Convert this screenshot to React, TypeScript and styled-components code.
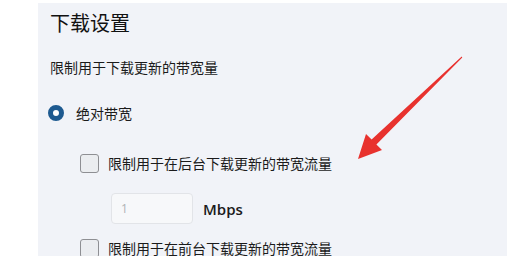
import React from "react";
import styled, { createGlobalStyle } from "styled-components";

const GlobalStyle = createGlobalStyle`
  html, body {
    margin: 0;
    padding: 0;
    background: #ffffff;
  }
  body {
    font-family: "Noto Sans CJK SC", "Noto Sans", sans-serif;
    color: #1b1b1b;
  }
`;

const Page = styled.div`
  width: 512px;
  height: 263px;
  overflow: hidden;
  padding: 3px 0 0 38px;
  box-sizing: border-box;
`;

const Panel = styled.section`
  position: relative;
  width: 469px;
  height: 253px;
  overflow: hidden;
  background: #f1f3f8;
  padding: 6px 0 0 12px;
  box-sizing: border-box;
  display: flex;
  flex-direction: column;
`;

const Title = styled.h2`
  margin: 0;
  font-size: 20px;
  line-height: 28px;
  font-weight: 400;
  color: #111;
`;

const Subtitle = styled.p`
  margin: 20px 0 0;
  font-size: 14px;
  line-height: 20px;
  color: #1b1b1b;
`;

const Row = styled.label<{ $top: number; $indent?: number }>`
  display: flex;
  align-items: center;
  gap: 9px;
  margin-top: ${(p) => p.$top}px;
  margin-left: ${(p) => p.$indent ?? 0}px;
  height: 20px;
  font-size: 14px;
  line-height: 20px;
  color: #1b1b1b;
`;

const Radio = styled.span`
  width: 16px;
  height: 16px;
  border-radius: 50%;
  box-sizing: border-box;
  border: 5px solid #1e5a90;
  background: #fff;
  margin-left: -2px;
  margin-right: 3px;
`;

const Checkbox = styled.span`
  width: 19px;
  height: 19px;
  box-sizing: border-box;
  border: 1px solid #8e8f93;
  border-radius: 3px;
  background: #ebedf0;
`;

const InputRow = styled.div`
  display: flex;
  align-items: center;
  gap: 10px;
  margin: 20px 0 0 61px;
`;

const Field = styled.div`
  width: 82px;
  height: 31px;
  box-sizing: border-box;
  border: 1px solid #e2e4e8;
  border-radius: 4px;
  background: #f7f8fa;
  padding-left: 9px;
  display: flex;
  align-items: center;
  font-family: "Open Sans", "Liberation Sans", sans-serif;
  font-size: 12px;
  color: #b0b2b6;
`;

const Unit = styled.span`
  font-family: "Open Sans", "Liberation Sans", sans-serif;
  font-weight: 600;
  font-size: 15px;
  color: #1b1b1b;
`;

const Arrow = styled.svg`
  position: absolute;
  left: 312px;
  top: 49px;
  width: 120px;
  height: 112px;
  pointer-events: none;
`;

export default function App() {
  return (
    <>
      <GlobalStyle />
      <Page>
        <Panel>
          <Title>下载设置</Title>
          <Subtitle>限制用于下载更新的带宽量</Subtitle>
          <Row $top={26}>
            <Radio />
            绝对带宽
          </Row>
          <Row $top={30} $indent={30}>
            <Checkbox />
            限制用于在后台下载更新的带宽流量
          </Row>
          <InputRow>
            <Field>1</Field>
            <Unit>Mbps</Unit>
          </InputRow>
          <Row $top={14} $indent={30}>
            <Checkbox />
            限制用于在前台下载更新的带宽流量
          </Row>
          <Arrow viewBox="0 0 120 112">
            <defs>
              <filter id="soft" x="-10%" y="-10%" width="120%" height="120%">
                <feGaussianBlur stdDeviation="0.5" />
              </filter>
            </defs>
            <polygon
              filter="url(#soft)"
              fill="#e8302e"
              points="8,107 16,82 21.6,87.5 111.7,4.6 112.3,5.4 26.4,92.5 32,98"
            />
          </Arrow>
        </Panel>
      </Page>
    </>
  );
}
